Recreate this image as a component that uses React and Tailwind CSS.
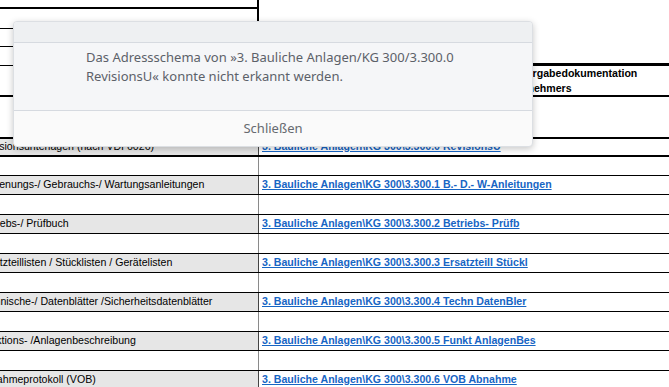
const dataRows = [
  ["Revisionsunterlagen (nach VDI 6026)", "3. Bauliche Anlagen\\KG 300\\3.300.0 RevisionsU"],
  ["Bedienungs-/ Gebrauchs-/ Wartungsanleitungen", "3. Bauliche Anlagen\\KG 300\\3.300.1 B.- D.- W-Anleitungen"],
  ["Betriebs-/ Prüfbuch", "3. Bauliche Anlagen\\KG 300\\3.300.2 Betriebs- Prüfb"],
  ["Ersatzteillisten / Stücklisten / Gerätelisten", "3. Bauliche Anlagen\\KG 300\\3.300.3 Ersatzteill Stückl"],
  ["Technische-/ Datenblätter /Sicherheitsdatenblätter", "3. Bauliche Anlagen\\KG 300\\3.300.4 Techn DatenBler"],
  ["Funktions- /Anlagenbeschreibung", "3. Bauliche Anlagen\\KG 300\\3.300.5 Funkt AnlagenBes"],
  ["Abnahmeprotokoll (VOB)", "3. Bauliche Anlagen\\KG 300\\3.300.6 VOB Abnahme"],
];

function DataPair({ label, link, first }) {
  return (
    <>
      {/* gray row with the link */}
      <div
        className={`grid grid-cols-[281px_410px] border-black ${
          first ? "h-[18px] border-t-2" : "h-[19px] border-t"
        }`}
      >
        <div className="flex items-center overflow-hidden whitespace-nowrap bg-[#e6e6e6] border-r border-[#444]">
          {label}
        </div>
        <div className="flex items-center overflow-hidden whitespace-nowrap pl-[3px]">
          <span className="font-bold text-[#1765c4] underline underline-offset-[1px]">{link}</span>
        </div>
      </div>
      {/* empty spacer row */}
      <div
        className={`grid h-[20px] grid-cols-[281px_410px] border-black ${
          first ? "border-t-2" : "border-t"
        }`}
      >
        <div className="border-r border-[#8a8a8a]" />
        <div />
      </div>
    </>
  );
}

export default function App() {
  return (
    <div className="relative h-[387px] w-[669px] overflow-hidden bg-white font-['Liberation_Sans',Arial,sans-serif] text-[10.6px] text-black">
      {/* spreadsheet, scrolled a bit to the right */}
      <div className="-ml-[22px] flex w-[691px] flex-col">
        <div className="grid h-[7px] grid-cols-[281px_410px]">
          <div className="border-r-2 border-black" />
          <div />
        </div>
        <div className="grid h-[21px] grid-cols-[281px_410px]">
          <div className="border-t-2 border-r-2 border-black" />
          <div />
        </div>
        <div className="grid h-[18px] grid-cols-[281px_410px]">
          <div className="border-t border-r-2 border-black" />
          <div />
        </div>
        <div className="grid h-[19px] grid-cols-[281px_410px]">
          <div className="border-t border-r-2 border-black" />
          <div className="border-b-2 border-black" />
        </div>
        <div className="grid h-[30px] grid-cols-[281px_410px] border-t border-black">
          <div className="border-r-2 border-black" />
          <div className="flex flex-col justify-center pl-[210px] font-bold leading-[14.5px]">
            <span>Link zur Übergabedokumentation</span>
            <span>des Auftragnehmers</span>
          </div>
        </div>
        <div className="grid h-[42px] grid-cols-[281px_410px] border-t-2 border-black">
          <div className="border-r-2 border-black" />
          <div />
        </div>
        {dataRows.map(([label, link], i) => (
          <DataPair key={i} label={label} link={link} first={i === 0} />
        ))}
      </div>

      {/* error dialog */}
      <div className="absolute left-[13px] top-[21px] flex h-[126px] w-[520px] flex-col overflow-hidden rounded-[4px] border border-[#dcdfe3] bg-[#fafafa] font-['Noto_Sans',sans-serif] shadow-[0_2px_7px_rgba(0,0,0,0.22)]">
        <div className="h-[21px] shrink-0 border-b border-[#d6dae0] bg-[#eef0f2]" />
        <div className="flex h-[68px] shrink-0 items-start border-b border-[#d6dae0] bg-[#f5f6f8] pl-[72px] pt-[5px] text-[13px] leading-[18.5px] text-[#5c6169]">
          <p>
            Das Adressschema von »3. Bauliche Anlagen/KG 300/3.300.0
            <br />
            RevisionsU« konnte nicht erkannt werden.
          </p>
        </div>
        <div className="flex flex-1 items-center justify-center text-[13px] text-[#666a70]">
          Schließen
        </div>
      </div>
    </div>
  );
}
